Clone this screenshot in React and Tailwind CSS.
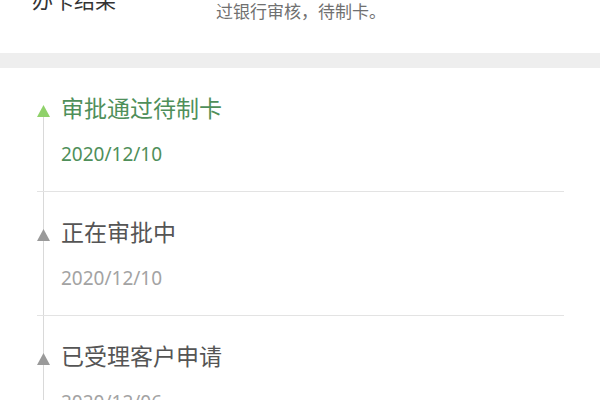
import React from 'react';

const steps = [
  { title: '审批通过待制卡', date: '2020/12/10', active: true },
  { title: '正在审批中', date: '2020/12/10', active: false },
  { title: '已受理客户申请', date: '2020/12/06', active: false },
];

// Small upward triangle used as the timeline marker.
function Marker({ active }) {
  return (
    <svg
      className="absolute left-[0px] top-[37px]"
      width="13"
      height="12"
      viewBox="0 0 13 12"
    >
      <polygon points="6.5,0 13,12 0,12" fill={active ? '#8fd16a' : '#9a9a9a'} />
    </svg>
  );
}

export default function App() {
  return (
    <div
      className="h-[400px] w-[600px] overflow-hidden bg-white"
      style={{ fontFamily: '"Noto Sans", "Noto Sans CJK SC", sans-serif' }}
    >
      {/* card result row, scrolled partly out of view */}
      <div className="-mt-[48px] flex items-center pl-[32px] pt-[24px] pb-[29px]">
        <div className="w-[184px] text-[21px] leading-[24px] text-[#333333]">办卡结果</div>
        <div className="text-[17px] leading-[24px] text-[#707070]">
          <div>您的办卡申请已通</div>
          <div>过银行审核，待制卡。</div>
        </div>
      </div>

      <div className="h-[15px] bg-[#eeeeee]" />

      <div className="relative ml-[37px] mr-[36px]">
        <div className="absolute left-[6px] top-[49px] bottom-0 w-px bg-[#d9d9d9]" />
        {steps.map((step) => (
          <div key={step.title} className="relative border-b border-[#e3e3e3] pl-[24px] pt-[25px] pb-[24px]">
            <Marker active={step.active} />
            <div
              className={
                step.active
                  ? 'text-[23px] leading-[30px] text-[#4f8f5a]'
                  : 'text-[23px] leading-[30px] text-[#555555]'
              }
            >
              {step.title}
            </div>
            <div
              className={
                step.active
                  ? 'mt-[18px] text-[19px] leading-[26px] text-[#4f8f5a]'
                  : 'mt-[18px] text-[19px] leading-[26px] text-[#a3a3a3]'
              }
            >
              {step.date}
            </div>
          </div>
        ))}
      </div>
    </div>
  );
}
